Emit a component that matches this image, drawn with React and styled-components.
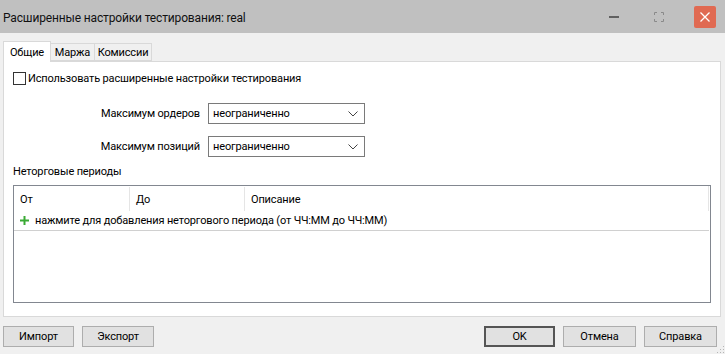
import React from 'react';
import styled, { createGlobalStyle } from 'styled-components';

const Global = createGlobalStyle`
  html, body { margin: 0; padding: 0; background: #f0f0f0; }
  body { font-family: Roboto, "Liberation Sans", sans-serif; font-size: 11px; letter-spacing: -0.15px; color: #000; }
`;

const Window = styled.div`
  width: 725px;
  height: 354px;
  display: flex;
  flex-direction: column;
  background: #f0f0f0;
  overflow: hidden;
  position: relative;
`;

const TitleBar = styled.div`
  height: 33px;
  flex: none;
  background: #c0c0c0;
  display: flex;
  align-items: center;
  padding-left: 3px;
`;

const Title = styled.div`
  font-size: 12px;
  padding-top: 2px;
  color: #111;
`;

const Controls = styled.div`
  margin-left: auto;
  display: flex;
  align-items: center;
  height: 100%;
`;

const Ctl = styled.div`
  width: ${p => p.w}px;
  height: 22px;
  display: flex;
  align-items: center;
  justify-content: center;
  margin-right: ${p => p.mr || 0}px;
  border-radius: 2px;
  background: ${p => p.bg || 'transparent'};
`;

const Body = styled.div`
  flex: 1;
  display: flex;
  flex-direction: column;
  padding: 8px 4px 0 3px;
`;

const TabRow = styled.div`
  display: flex;
  align-items: flex-end;
  height: 20px;
  position: relative;
  z-index: 1;
`;

const Tab = styled.div`
  height: ${p => (p.active ? 21 : 18)}px;
  margin-bottom: ${p => (p.active ? -1 : 0)}px;
  box-sizing: border-box;
  width: ${p => p.w}px;
  border: 1px solid #d9d9d9;
  border-bottom: ${p => (p.active ? 'none' : '1px solid #d9d9d9')};
  border-left: ${p => (p.first ? '1px solid #d9d9d9' : 'none')};
  background: ${p => (p.active ? '#fff' : '#f0f0f0')};
  display: flex;
  align-items: center;
  justify-content: center;
  line-height: 1;
  padding-top: ${p => (p.active ? 0 : 1)}px;
`;

const Panel = styled.div`
  height: 256px;
  box-sizing: border-box;
  background: #fff;
  border: 1px solid #d9d9d9;
  padding: 10px 9px 0 9px;
  display: flex;
  flex-direction: column;
`;

const CheckRow = styled.label`
  display: flex;
  align-items: center;
  height: 13px;
  gap: 2px;
`;

const Box = styled.span`
  width: 13px;
  height: 13px;
  box-sizing: border-box;
  border: 1px solid #333;
  background: #fff;
  flex: none;
`;

const Form = styled.div`
  display: grid;
  grid-template-columns: 187px 157px;
  column-gap: 8px;
  row-gap: 12px;
  margin-top: 18px;
`;

const FieldLabel = styled.div`
  text-align: right;
  align-self: center;
`;

const Select = styled.div`
  height: 21px;
  box-sizing: border-box;
  border: 1px solid #7a7a7a;
  display: flex;
  align-items: center;
  padding: 0 6px 0 4px;
  justify-content: space-between;
  background: #fff;
`;

const SectionLabel = styled.div`
  margin-top: 8px;
  height: 14px;
  line-height: 14px;
`;

const List = styled.div`
  margin-top: 6px;
  height: 118px;
  box-sizing: border-box;
  border: 1px solid #828790;
  display: flex;
  flex-direction: column;
`;

const Header = styled.div`
  height: 25px;
  display: grid;
  grid-template-columns: 116px 115px 1fr;
  border-right: 1px solid #e5e5e5;
  margin-right: 1px;
`;

const HeadCell = styled.div`
  display: flex;
  align-items: center;
  padding-left: 6px;
  border-right: ${p => (p.last ? 'none' : '1px solid #e5e5e5')};
  margin: 1px 0 0 0;
`;

const AddRow = styled.div`
  height: 19px;
  border-bottom: 1px solid #d0d0d0;
  display: flex;
  align-items: center;
  padding-left: 6px;
  gap: 6px;
  margin-right: 1px;
`;

const Footer = styled.div`
  display: flex;
  align-items: center;
  margin-top: 9px;
  padding-right: 4px;
  gap: 8px;
`;

const Button = styled.div`
  width: ${p => p.w || 73}px;
  height: 21px;
  box-sizing: border-box;
  background: #e1e1e1;
  border: ${p => (p.primary ? '2px solid #555' : '1px solid #adadad')};
  display: flex;
  align-items: center;
  justify-content: center;
`;

const Spacer = styled.div`
  flex: 1;
`;

const Grip = styled.div`
  position: absolute;
  right: 1px;
  bottom: 1px;
  width: 8px;
  height: 8px;
  background-image: radial-gradient(circle, #b5b5b5 0.8px, transparent 1px);
  background-size: 3px 3px;
  clip-path: polygon(100% 0, 100% 100%, 0 100%);
`;

const Chevron = () => (
  <svg width="10" height="6" viewBox="0 0 10 6">
    <path d="M0.5 0.5 L5 5 L9.5 0.5" fill="none" stroke="#444" strokeWidth="1" />
  </svg>
);

const PlusIcon = () => (
  <svg width="9" height="9" viewBox="0 0 9 9">
    <path d="M3.5 0 H5.5 V3.5 H9 V5.5 H5.5 V9 H3.5 V5.5 H0 V3.5 H3.5 Z" fill="#3aaa35" />
  </svg>
);

export default function App() {
  return (
    <>
      <Global />
      <Window>
        <TitleBar>
          <Title>Расширенные настройки тестирования: real</Title>
          <Controls>
            <Ctl w={22} mr={23}>
              <svg width="10" height="2" viewBox="0 0 10 2"><rect x="0" y="0.5" width="10" height="1" fill="#000" /></svg>
            </Ctl>
            <Ctl w={22} mr={24}>
              <svg width="10" height="10" viewBox="0 0 10 10" fill="none" stroke="#8a8a8a" strokeWidth="1">
                <path d="M0.5 3 V0.5 H3 M7 0.5 H9.5 V3 M9.5 7 V9.5 H7 M3 9.5 H0.5 V7" />
              </svg>
            </Ctl>
            <Ctl w={22} mr={9} bg="#e06a52">
              <svg width="10" height="10" viewBox="0 0 10 10"><path d="M0.5 0.5 L9.5 9.5 M9.5 0.5 L0.5 9.5" stroke="#fff" strokeWidth="1.3" /></svg>
            </Ctl>
          </Controls>
        </TitleBar>
        <Body>
          <TabRow>
            <Tab active first w={48}>Общие</Tab>
            <Tab w={44}>Маржа</Tab>
            <Tab w={57}>Комиссии</Tab>
          </TabRow>
          <Panel>
            <CheckRow>
              <Box />
              <span>Использовать расширенные настройки тестирования</span>
            </CheckRow>
            <Form>
              <FieldLabel>Максимум ордеров</FieldLabel>
              <Select><span>неограниченно</span><Chevron /></Select>
              <FieldLabel>Максимум позиций</FieldLabel>
              <Select><span>неограниченно</span><Chevron /></Select>
            </Form>
            <SectionLabel>Неторговые периоды</SectionLabel>
            <List>
              <Header>
                <HeadCell>От</HeadCell>
                <HeadCell>До</HeadCell>
                <HeadCell last>Описание</HeadCell>
              </Header>
              <AddRow>
                <PlusIcon />
                <span>нажмите для добавления неторгового периода (от ЧЧ:ММ до ЧЧ:ММ)</span>
              </AddRow>
            </List>
          </Panel>
          <Footer>
            <Button w={71}>Импорт</Button>
            <Button w={72}>Экспорт</Button>
            <Spacer />
            <Button primary w={71}>OK</Button>
            <Button>Отмена</Button>
            <Button>Справка</Button>
          </Footer>
        </Body>
        <Grip />
      </Window>
    </>
  );
}
